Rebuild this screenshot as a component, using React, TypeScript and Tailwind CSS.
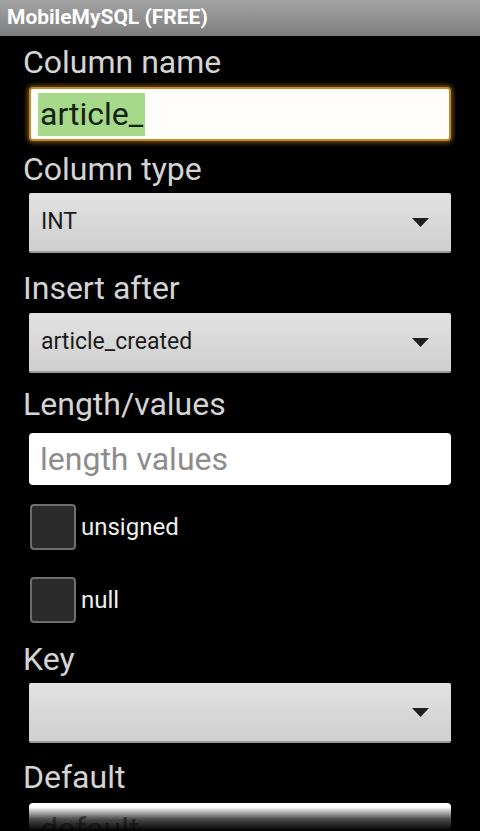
import React from 'react'

const font = { fontFamily: 'Roboto, "Noto Sans", sans-serif' }

function Label({ text, className = '' }: { text: string; className?: string }) {
  return (
    <div className={`pl-[23px] text-[32px] leading-[38px] text-[#d4d4d4] ${className}`}>{text}</div>
  )
}

function Caret() {
  return (
    <svg width="17" height="9" viewBox="0 0 17 9" className="shrink-0">
      <path d="M0 0 H17 L8.5 9 Z" fill="#1e1e1e" />
    </svg>
  )
}

function Spinner({ value, className = '' }: { value: string; className?: string }) {
  return (
    <div
      className={`mx-[29px] flex h-[60px] items-center justify-between rounded-[2px] border-b-2 border-[#9a9a9a] bg-gradient-to-b from-[#e2e2e2] to-[#cfcfcf] pl-[12px] pr-[22px] ${className}`}
    >
      <span className="text-[23px] text-[#1c1c1c]">{value}</span>
      <Caret />
    </div>
  )
}

function Check({ label, className = '' }: { label: string; className?: string }) {
  return (
    <div className={`ml-[30px] flex items-center gap-[5px] ${className}`}>
      <div className="h-[46px] w-[46px] rounded-[4px] border-2 border-[#6e6e6e] bg-[#2a2a2a]" />
      <span className="text-[24px] text-[#eeeeee]">{label}</span>
    </div>
  )
}

export default function App() {
  return (
    <div className="relative h-[831px] w-[480px] overflow-hidden bg-black" style={font}>
      {/* Title bar */}
      <div className="flex h-[36px] items-center bg-gradient-to-b from-[#a4a4a4] to-[#7e7e7e] px-[7px]">
        <span className="text-[21px] font-bold text-white">MobileMySQL (FREE)</span>
      </div>

      <div className="flex flex-col">
        <Label text="Column name" className="mt-[7px]" />

        <div className="mx-[29px] mt-[6px] rounded-[4px] border-2 border-[#c48a2c] bg-[#fffefa] shadow-[0_0_4px_2px_rgba(190,130,40,0.55)]">
          <div className="flex h-[50px] items-center pl-[7px]">
            <span className="bg-[#a6da8a] px-[2px] text-[32px] leading-[43px] text-[#152010]">article_</span>
          </div>
        </div>

        <Label text="Column type" className="mt-[9px]" />
        <Spinner value="INT" className="mt-[5px]" />

        <Label text="Insert after" className="mt-[16px]" />
        <Spinner value="article_created" className="mt-[6px]" />

        <Label text="Length/values" className="mt-[12px]" />
        <div className="mx-[29px] mt-[10px] flex h-[52px] items-center rounded-[4px] bg-white pl-[11px]">
          <span className="text-[32px] text-[#8c8c8c]">length values</span>
        </div>

        <Check label="unsigned" className="mt-[19px]" />
        <Check label="null" className="mt-[27px]" />

        <Label text="Key" className="mt-[17px]" />
        <Spinner value="" className="mt-[5px]" />

        <Label text="Default" className="mt-[15px]" />
        <div className="mx-[29px] mt-[7px] flex h-[52px] items-center rounded-[4px] bg-white pl-[11px]">
          <span className="text-[32px] text-[#8c8c8c]">default</span>
        </div>
      </div>

      {/* scroll edge fade */}
      <div className="pointer-events-none absolute bottom-0 left-0 right-0 h-[24px] bg-gradient-to-b from-transparent via-black/70 to-black" />
    </div>
  )
}
